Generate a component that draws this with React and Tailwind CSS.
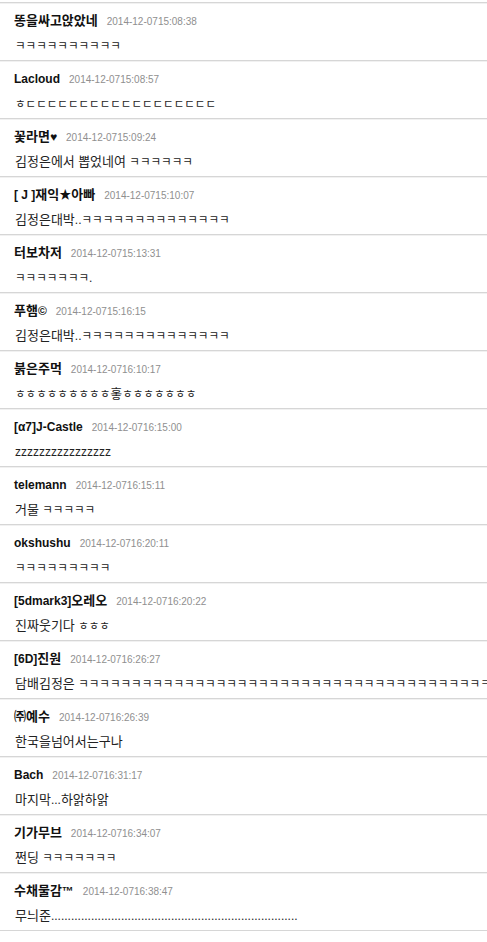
const COMMENTS = [
  { name: '똥을싸고앉았네', date: '2014-12-0715:08:38', text: 'ㅋㅋㅋㅋㅋㅋㅋㅋㅋㅋ' },
  { name: 'Lacloud', date: '2014-12-0715:08:57', text: 'ㅎㄷㄷㄷㄷㄷㄷㄷㄷㄷㄷㄷㄷㄷㄷㄷㄷㄷㄷ' },
  { name: '꽃라면♥', date: '2014-12-0715:09:24', text: '김정은에서 뽑었네여 ㅋㅋㅋㅋㅋㅋ' },
  { name: '[ J ]재익★아빠', date: '2014-12-0715:10:07', text: '김정은대박..ㅋㅋㅋㅋㅋㅋㅋㅋㅋㅋㅋㅋㅋㅋ' },
  { name: '터보차저', date: '2014-12-0715:13:31', text: 'ㅋㅋㅋㅋㅋㅋㅋ.' },
  { name: '푸햄©', date: '2014-12-0715:16:15', text: '김정은대박..ㅋㅋㅋㅋㅋㅋㅋㅋㅋㅋㅋㅋㅋㅋ' },
  { name: '붉은주먹', date: '2014-12-0716:10:17', text: 'ㅎㅎㅎㅎㅎㅎㅎㅎㅎ홓ㅎㅎㅎㅎㅎㅎㅎ' },
  { name: '[α7]J-Castle', date: '2014-12-0716:15:00', text: 'zzzzzzzzzzzzzzzz' },
  { name: 'telemann', date: '2014-12-0716:15:11', text: '거물 ㅋㅋㅋㅋㅋ' },
  { name: 'okshushu', date: '2014-12-0716:20:11', text: 'ㅋㅋㅋㅋㅋㅋㅋㅋㅋ' },
  { name: '[5dmark3]오레오', date: '2014-12-0716:20:22', text: '진짜웃기다 ㅎㅎㅎ' },
  { name: '[6D]진원', date: '2014-12-0716:26:27', text: '담배김정은 ' + 'ㅋ'.repeat(44) },
  { name: '㈜예수', date: '2014-12-0716:26:39', text: '한국을넘어서는구나' },
  { name: 'Bach', date: '2014-12-0716:31:17', text: '마지막...하앍하앍' },
  { name: '기가무브', date: '2014-12-0716:34:07', text: '쩐딩 ㅋㅋㅋㅋㅋㅋㅋ' },
  { name: '수채물감™', date: '2014-12-0716:38:47', text: '무늬준' + '.'.repeat(74) },
];

// split into runs: hangul syllables, jamo, everything else
function runs(str) {
  return str.match(/[가-힣]+|[ㄱ-ㆎ]+|[^가-힣ㄱ-ㆎ]+/g) || [];
}

function Mixed({ str, syllable, jamo, other }) {
  return runs(str).map((r, i) => {
    let cls = other;
    if (/[가-힣]/.test(r[0])) cls = syllable;
    else if (/[ㄱ-ㆎ]/.test(r[0])) cls = jamo;
    return (
      <span key={i} className={cls}>
        {r}
      </span>
    );
  });
}

function Comment({ c }) {
  return (
    <li className="h-[58px] overflow-hidden whitespace-nowrap border-t border-[#d6d6d6] px-[14px] pt-[9px] shadow-[inset_0_1px_0_#f1f1f1]">
      <div className="flex h-[16px] items-baseline gap-[9px] leading-[16px]">
        <span className="font-bold text-[#111]">
          <Mixed str={c.name} syllable="text-[13px]" jamo="text-[12px]" other="text-[12px]" />
        </span>
        <span className="text-[10px] text-[#8f8f8f]">{c.date}</span>
      </div>
      <p className="mt-[9px] pl-px leading-[16px] text-[#222]">
        <Mixed str={c.text} syllable="text-[13px]" jamo="text-[11.5px]" other="text-[12px]" />
      </p>
    </li>
  );
}

export default function App() {
  return (
    <div
      className="min-h-[942px] bg-white pt-[2px]"
      style={{ fontFamily: '"Liberation Sans", "Noto Sans CJK KR", sans-serif' }}
    >
      <ul className="border-b border-[#d6d6d6]">
        {COMMENTS.map((c) => (
          <Comment key={c.date} c={c} />
        ))}
      </ul>
    </div>
  );
}
